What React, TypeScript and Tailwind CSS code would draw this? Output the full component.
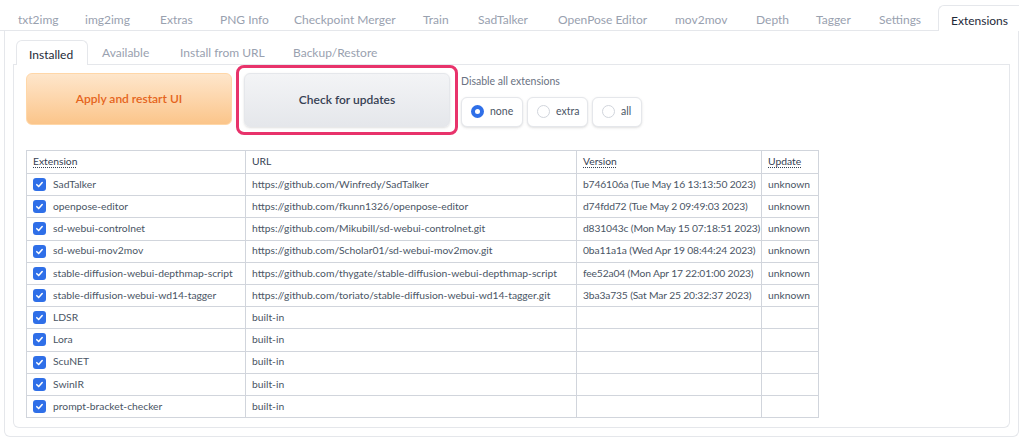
const topTabs: [string, number][] = [
  ["txt2img", 67],
  ["img2img", 75],
  ["Extras", 60],
  ["PNG Info", 74],
  ["Checkpoint Merger", 129],
  ["Train", 55],
  ["SadTalker", 80],
  ["OpenPose Editor", 117],
  ["mov2mov", 81],
  ["Depth", 60],
  ["Tagger", 63],
  ["Settings", 59],
];

const subTabs: [string, number][] = [
  ["Available", 78],
  ["Install from URL", 113],
  ["Backup/Restore", 120],
];

const extensions = [
  ["SadTalker", "https://github.com/Winfredy/SadTalker", "b746106a (Tue May 16 13:13:50 2023)", "unknown"],
  ["openpose-editor", "https://github.com/fkunn1326/openpose-editor", "d74fdd72 (Tue May 2 09:49:03 2023)", "unknown"],
  ["sd-webui-controlnet", "https://github.com/Mikubill/sd-webui-controlnet.git", "d831043c (Mon May 15 07:18:51 2023)", "unknown"],
  ["sd-webui-mov2mov", "https://github.com/Scholar01/sd-webui-mov2mov.git", "0ba11a1a (Wed Apr 19 08:44:24 2023)", "unknown"],
  ["stable-diffusion-webui-depthmap-script", "https://github.com/thygate/stable-diffusion-webui-depthmap-script", "fee52a04 (Mon Apr 17 22:01:00 2023)", "unknown"],
  ["stable-diffusion-webui-wd14-tagger", "https://github.com/toriato/stable-diffusion-webui-wd14-tagger.git", "3ba3a735 (Sat Mar 25 20:32:37 2023)", "unknown"],
  ["LDSR", "built-in", "", ""],
  ["Lora", "built-in", "", ""],
  ["ScuNET", "built-in", "", ""],
  ["SwinIR", "built-in", "", ""],
  ["prompt-bracket-checker", "built-in", "", ""],
];

function Check() {
  return (
    <span className="w-[13px] h-[13px] rounded-[3px] bg-[#2f6fe8] flex items-center justify-center shrink-0">
      <svg width="9" height="9" viewBox="0 0 10 10" fill="none">
        <path d="M2 5.2 L4.1 7.3 L8 2.8" stroke="white" strokeWidth="1.7" strokeLinecap="round" strokeLinejoin="round" />
      </svg>
    </span>
  );
}

function Radio({ label, width, checked }: { label: string; width: string; checked?: boolean }) {
  return (
    <label
      className={`${width} h-[30px] flex items-center gap-[6px] pl-[9px] border border-gray-200 rounded-md shadow-sm bg-white text-[10.5px] text-gray-600 whitespace-nowrap`}
    >
      {checked ? (
        <span className="w-[13px] h-[13px] rounded-full bg-[#2f6fe8] flex items-center justify-center shrink-0">
          <span className="w-[5px] h-[5px] rounded-full bg-white" />
        </span>
      ) : (
        <span className="w-[13px] h-[13px] rounded-full border border-gray-300 bg-white shrink-0" />
      )}
      {label}
    </label>
  );
}

export default function App() {
  return (
    <div className="w-[1019px] h-[437px] bg-white overflow-hidden font-['Lato',sans-serif] text-gray-700">
      {/* main tab strip */}
      <div className="flex items-end h-[31px] pl-[5px] border-b border-gray-200 whitespace-nowrap">
        {topTabs.map(([t, w]) => (
          <div
            key={t}
            style={{ width: w }}
            className="h-[26px] pt-[5px] pl-[13px] shrink-0 flex items-center text-[12px] text-gray-400"
          >
            {t}
          </div>
        ))}
        <div className="ml-auto h-[26px] pt-[5px] w-[81px] pl-[12px] flex items-center text-[12px] text-gray-800 border border-r-0 border-b-0 border-gray-200 rounded-tl-md bg-white -mb-px">
          Extensions
        </div>
      </div>

      <div className="ml-[4px] h-[406px] border-x border-b border-gray-200 rounded-b-md pt-[9px] px-[8px] pb-[8px]">
        {/* sub tabs */}
        <div className="flex items-end h-[25px] pl-[3px] border-b border-gray-200 whitespace-nowrap">
          <div className="h-[25px] w-[72px] pt-[3px] pl-[12px] flex items-center text-[12px] text-gray-800 border border-b-0 border-gray-200 rounded-t-md bg-white -mb-px">
            Installed
          </div>
          {subTabs.map(([t, w]) => (
            <div key={t} style={{ width: w }} className="h-[25px] pt-[3px] pl-[14px] shrink-0 flex items-center text-[12px] text-gray-400">
              {t}
            </div>
          ))}
        </div>

        <div className="h-[363px] border-x border-b border-gray-200 rounded-b-md pl-[12px] pt-[8px]">
          {/* action row */}
          <div className="flex items-start">
            <button className="w-[206px] h-[52px] rounded-md border border-orange-200 bg-gradient-to-b from-[#fee6cb] to-[#fbc58a] text-[12px] font-semibold text-[#e5641c]">
              Apply and restart UI
            </button>
            <div className="ml-[4px] -mt-[8px] p-[5px] border-[3px] border-[#e8336b] rounded-lg">
              <button className="w-[206px] h-[54px] rounded-md border border-gray-200 bg-gradient-to-b from-[#f3f4f6] to-[#e5e7eb] text-[12px] font-semibold text-gray-700 shadow-sm">
                Check for updates
              </button>
            </div>
            <div className="ml-[3px] mt-[1px]">
              <div className="text-[10.5px] text-gray-500 mb-[7px] whitespace-nowrap">Disable all extensions</div>
              <div className="flex gap-[4px]">
                <Radio label="none" width="w-[62px]" checked />
                <Radio label="extra" width="w-[61px]" />
                <Radio label="all" width="w-[50px]" />
              </div>
            </div>
          </div>

          {/* extension table */}
          <table className="mt-[15px] border-collapse table-fixed w-[792px] text-[10.3px] text-gray-600 whitespace-nowrap">
            <colgroup>
              <col className="w-[219px]" />
              <col className="w-[331px]" />
              <col className="w-[185px]" />
              <col className="w-[57px]" />
            </colgroup>
            <thead>
              <tr className="h-[23px]">
                {["Extension", "URL", "Version", "Update"].map((h, i) => (
                  <th key={h} className="border border-gray-300 px-[6px] text-left font-normal text-gray-700">
                    <span className={i === 1 ? "" : "underline decoration-dotted underline-offset-2"}>{h}</span>
                  </th>
                ))}
              </tr>
            </thead>
            <tbody>
              {extensions.map(([name, url, ver, upd]) => (
                <tr key={name} className="h-[22.2px]">
                  <td className="border border-gray-300 px-[6px] overflow-hidden">
                    <div className="flex items-center gap-[7px]">
                      <Check />
                      {name}
                    </div>
                  </td>
                  <td className="border border-gray-300 px-[6px] overflow-hidden">{url}</td>
                  <td className="border border-gray-300 pl-[6px] pr-[2px] overflow-hidden tracking-[-0.15px]">{ver}</td>
                  <td className="border border-gray-300 px-[6px] overflow-hidden">{upd}</td>
                </tr>
              ))}
            </tbody>
          </table>
        </div>
      </div>
    </div>
  );
}
